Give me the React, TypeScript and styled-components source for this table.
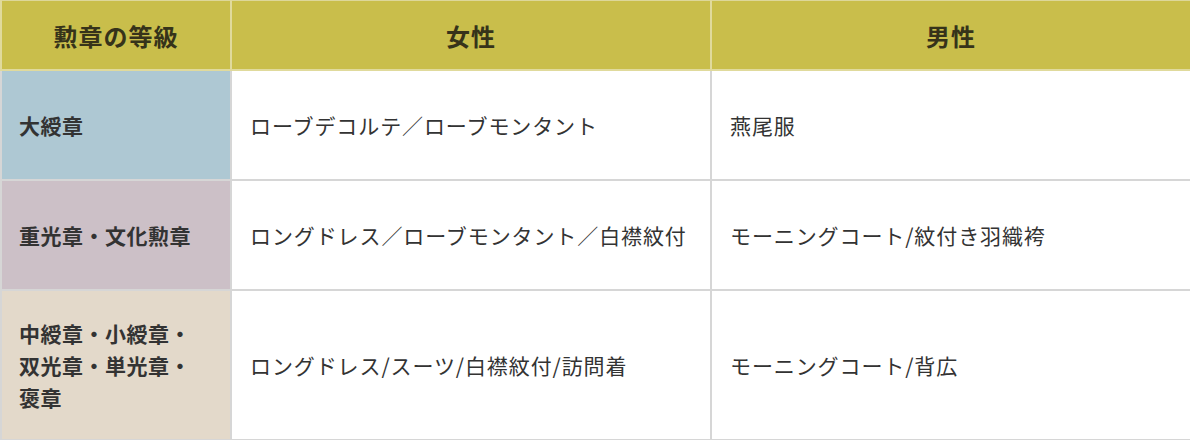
import React from 'react';
import styled, { createGlobalStyle } from 'styled-components';

const GlobalStyle = createGlobalStyle`
    body {
        margin: 0;
        background: #ffffff;
        font-family: "Noto Sans CJK JP", "Noto Sans", sans-serif;
    }
`;

// Whole decoration dress-code table
const Table = styled.table`
    width: 1190px;
    border-collapse: collapse;
    table-layout: fixed;
    color: #333333;
`;

const HeadCell = styled.th`
    height: 68px;
    padding: 0;
    background: #c9be4b;
    border: 2px solid #e0da9c;
    border-top: 1px solid #ddd79a;
    color: #36331a;
    font-size: 24px;
    font-weight: 700;
    letter-spacing: 1px;
    text-align: center;
    vertical-align: middle;
`;

// Row height varies by how much text the label has
const Row = styled.tr<{ $height: number }>`
    height: ${p => p.$height}px;
`;

// Coloured first-column cell holding the decoration grade
const LabelCell = styled.td<{ $bg: string }>`
    padding: 0 14px 0 17px;
    background: ${p => p.$bg};
    border: 2px solid #d6d6d6;
    font-size: 21px;
    font-weight: 700;
    letter-spacing: 0.5px;
    line-height: 32px;
    color: #333333;
    vertical-align: middle;
`;

const Cell = styled.td`
    padding: 0 18px;
    border: 2px solid #d6d6d6;
    font-size: 21px;
    font-weight: 400;
    letter-spacing: 0.9px;
    line-height: 32px;
    color: #333333;
    vertical-align: middle;
`;

const rows = [
    { grade: ['大綬章'], bg: '#aec8d3', women: 'ローブデコルテ／ローブモンタント', men: '燕尾服', height: 110 },
    { grade: ['重光章・文化勲章'], bg: '#ccc0c7', women: 'ロングドレス／ローブモンタント／白襟紋付', men: 'モーニングコート/紋付き羽織袴', height: 110 },
    { grade: ['中綬章・小綬章・', '双光章・単光章・', '褒章'], bg: '#e3d9ca', women: 'ロングドレス/スーツ/白襟紋付/訪問着', men: 'モーニングコート/背広', height: 150 },
];

export default function App() {
    return (
        <>
            <GlobalStyle/>
            <Table>
                <colgroup>
                    <col style={{ width: 230 }}/>
                    <col style={{ width: 480 }}/>
                    <col style={{ width: 480 }}/>
                </colgroup>
                <thead>
                    <tr>
                        <HeadCell>勲章の等級</HeadCell>
                        <HeadCell>女性</HeadCell>
                        <HeadCell>男性</HeadCell>
                    </tr>
                </thead>
                <tbody>
                    {rows.map(r => (
                        <Row key={r.women} $height={r.height}>
                            <LabelCell $bg={r.bg}>
                                {r.grade.map((line, i) => (
                                    <React.Fragment key={line}>
                                        {i > 0 && <br/>}
                                        {line}
                                    </React.Fragment>
                                ))}
                            </LabelCell>
                            <Cell>{r.women}</Cell>
                            <Cell>{r.men}</Cell>
                        </Row>
                    ))}
                </tbody>
            </Table>
        </>
    );
}
